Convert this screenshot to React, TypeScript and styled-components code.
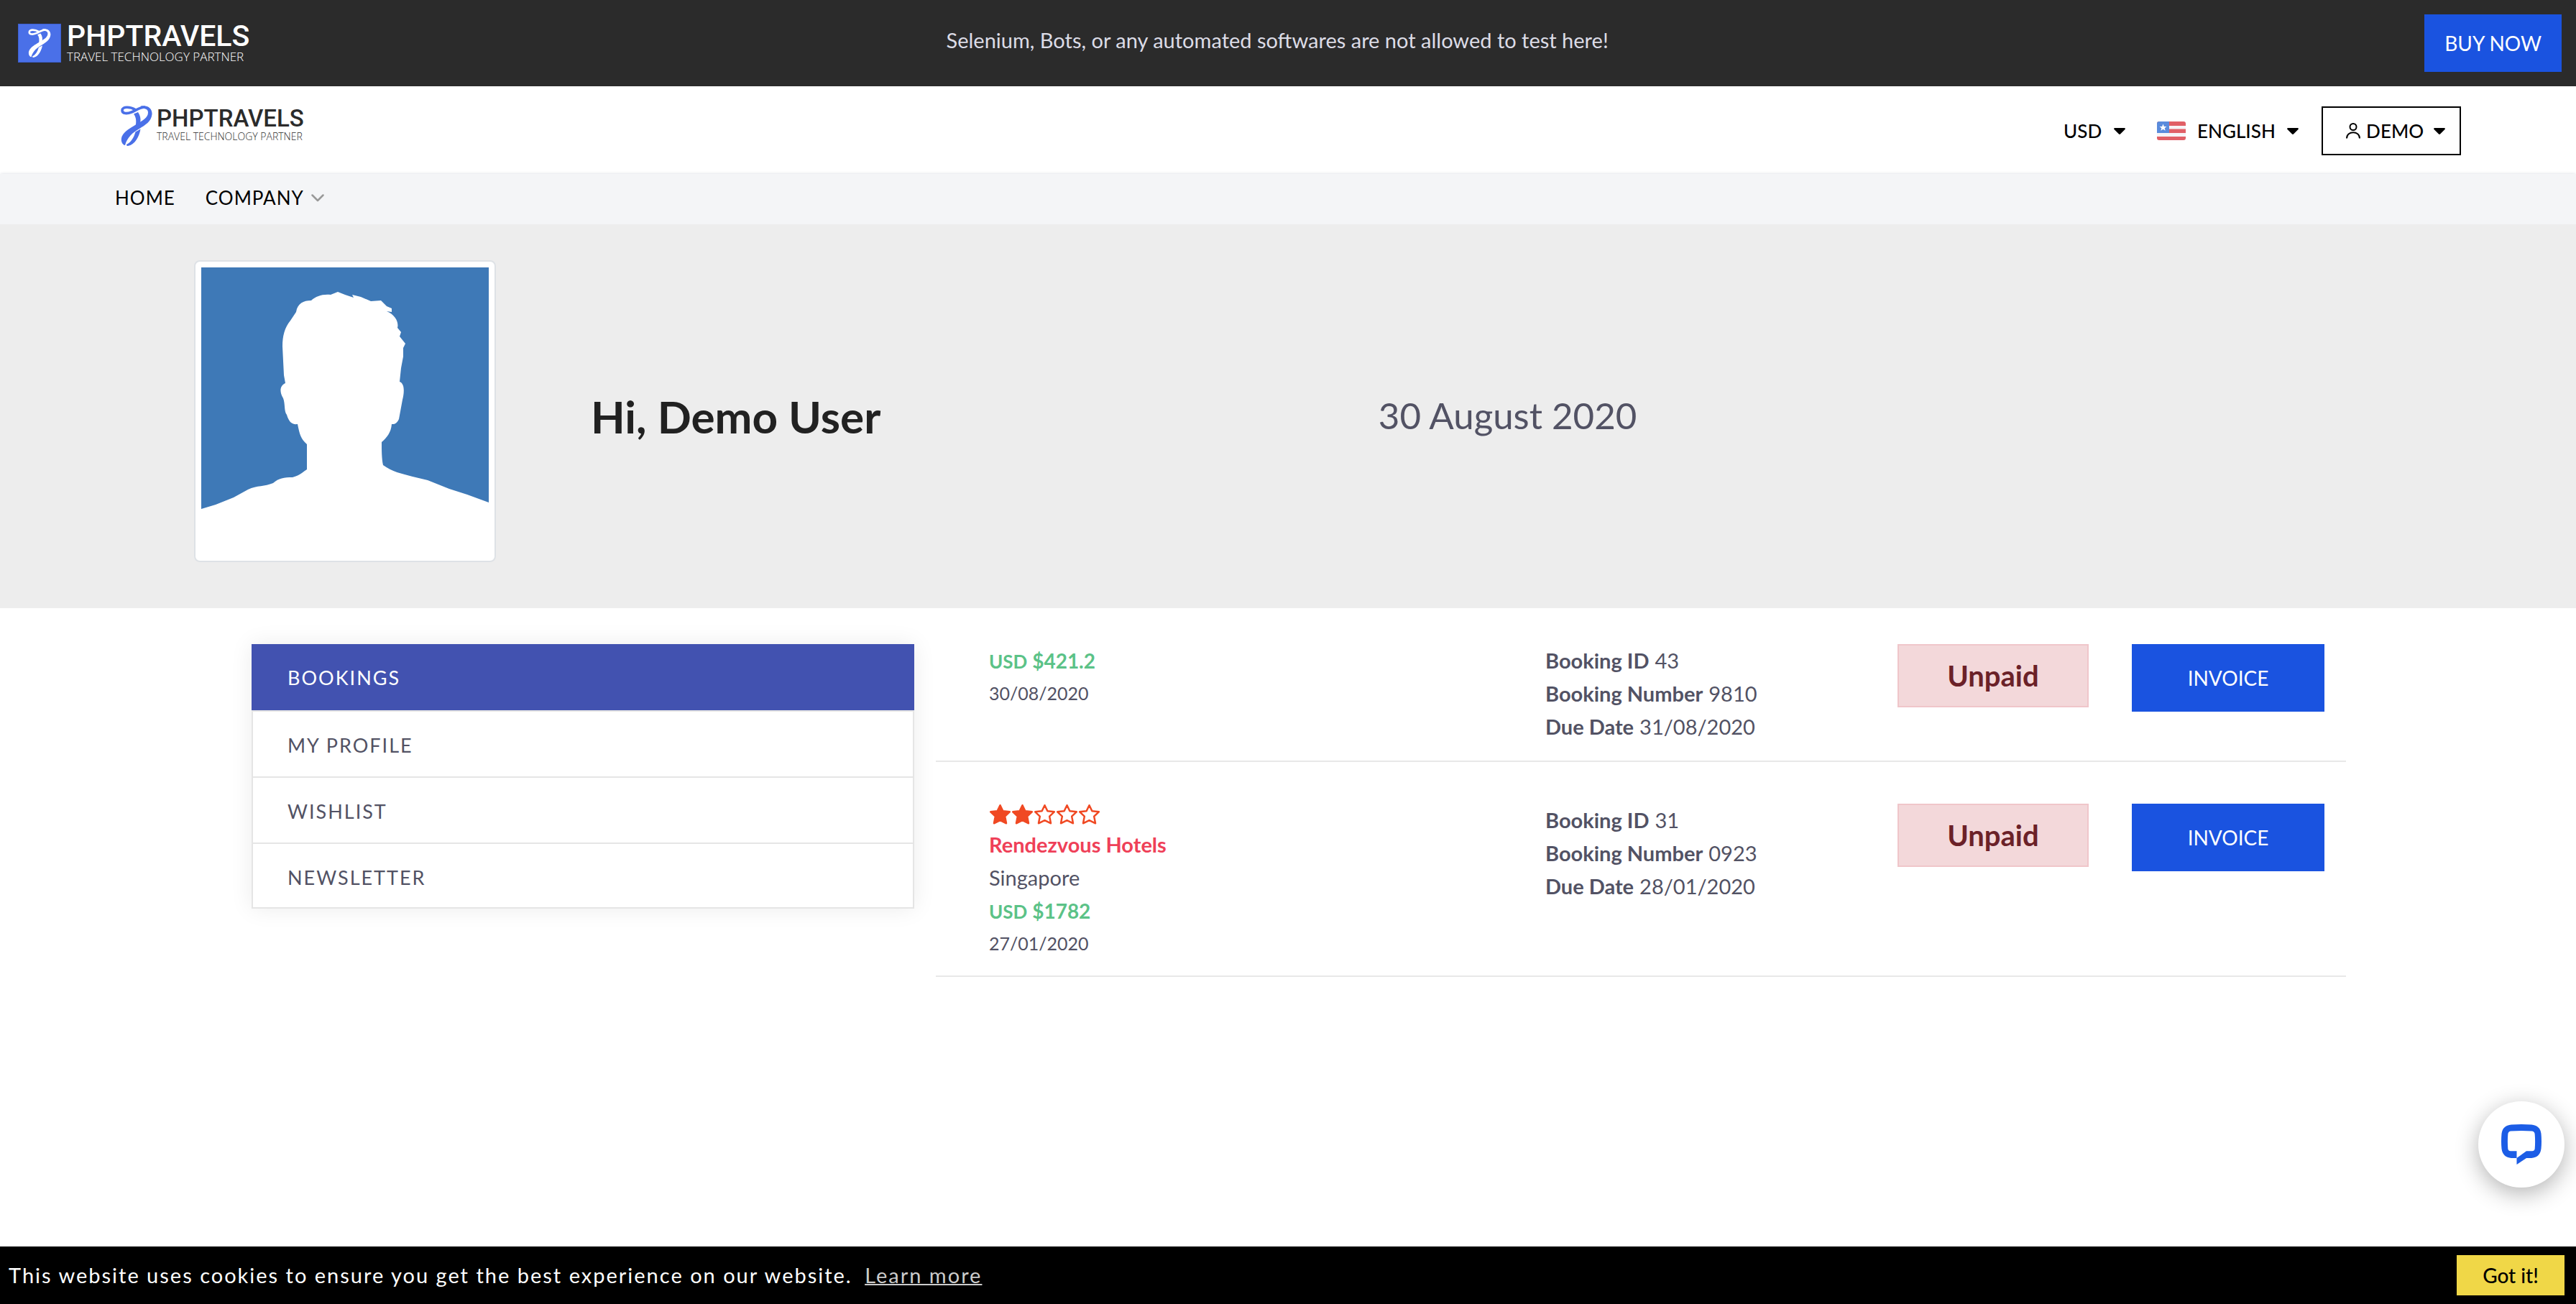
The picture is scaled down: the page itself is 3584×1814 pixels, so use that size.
import React from "react";
import styled, { createGlobalStyle } from "styled-components";

const GlobalStyle = createGlobalStyle`
  *, *::before, *::after { box-sizing: border-box; }
  body {
    margin: 0;
    background: #fff;
    color: #525264;
    font-family: Lato, "Open Sans", "Liberation Sans", sans-serif;
    font-size: 29px;
    line-height: 46px;
  }
  a { color: inherit; text-decoration: none; }
  button, select { font: inherit; color: inherit; }
  h1, p, ul, dl, dd { margin: 0; padding: 0; }
  ul { list-style: none; }
`;

const Page = styled.div`
  min-height: 100vh;
  display: flex;
  flex-direction: column;
`;

const TopBar = styled.div`
  display: grid;
  grid-template-columns: 1264fr auto 1298fr;
  align-items: center;
  min-height: 120px;
  padding: 20px 20px 20px 25px;
  background: #2b2b2b;
  color: #dcdce6;
`;

const Notice = styled.p`
  padding-bottom: 8px;
`;

const SolidButton = styled.a<{ $height: number }>`
  display: flex;
  align-items: center;
  justify-content: center;
  height: ${(p) => p.$height}px;
  padding: 0 28px;
  background: #1a53e0;
  color: #fff;
  font-size: 28px;
`;

const BuySlot = styled.div`
  display: flex;
  justify-content: flex-end;
`;

const Header = styled.header`
  display: flex;
  align-items: center;
  justify-content: space-between;
  min-height: 122px;
  padding: 2px 160px 0;
  color: #000;
  background: #fff;
`;

const LogoLink = styled.a<{ $gap: number; $color: string }>`
  display: flex;
  align-items: center;
  gap: ${(p) => p.$gap}px;
  color: ${(p) => p.$color};
`;

const LogoWords = styled.span`
  display: flex;
  flex-direction: column;
  padding-bottom: 4px;
`;

const LogoName = styled.span<{ $size: number; $line: number }>`
  font-family: Roboto, "Liberation Sans", sans-serif;
  font-size: ${(p) => p.$size}px;
  line-height: ${(p) => p.$line}px;
  font-weight: 500;
`;

const LogoTag = styled.span<{ $size: number }>`
  font-family: "Open Sans", "Noto Sans", sans-serif;
  font-size: ${(p) => p.$size}px;
  line-height: 16px;
  font-weight: 300;
`;

const LogoTile = styled.span`
  display: flex;
  align-items: center;
  justify-content: center;
  width: 60px;
  height: 54px;
  background: #4a70e8;
  border: 1px solid #3c5fd0;
`;

const HeaderLogo = styled.div`
  padding: 0 0 14px 8px;
`;

const Tools = styled.div`
  display: flex;
  align-items: center;
  font-size: 26px;
  font-weight: 500;
`;

const Picker = styled.label`
  display: flex;
  align-items: center;
  gap: 16px;
  margin-right: 44px;

  & + & { margin-right: 32px; }
`;

const PickerSelect = styled.select`
  appearance: none;
  border: 0;
  padding: 0;
  background: transparent;
  font-weight: 500;
`;

const AccountButton = styled.button`
  display: flex;
  align-items: center;
  height: 68px;
  padding: 0 20px 0 32px;
  gap: 14px;
  border: 2px solid #000;
  background: #fff;
  font-weight: 500;
`;

const AccountName = styled.span`
  display: flex;
  align-items: center;
  gap: 8px;
`;

const Nav = styled.nav`
  display: flex;
  align-items: center;
  gap: 42px;
  min-height: 70px;
  padding: 0 160px 4px;
  background: #f4f5f7;
  box-shadow: 0 -1px 4px -1px rgba(30, 50, 90, 0.18);
  color: #000;
  font-size: 26px;
  letter-spacing: 1px;
`;

const NavLink = styled.a`
  display: flex;
  align-items: center;
  gap: 10px;
`;

const Hero = styled.section`
  display: grid;
  grid-template-columns: 552px 36% 1fr;
  align-items: center;
  padding: 50px 270px 64px;
  background: #ededed;
`;

const AvatarCard = styled.div`
  width: 420px;
  height: 420px;
  padding: 8px;
  border: 2px solid #dee2e6;
  border-radius: 8px;
  background: #fff;

  svg { display: block; }
`;

const Greeting = styled.h1`
  padding-top: 14px;
  color: #212121;
  font-size: 62px;
  line-height: 72px;
  font-weight: 700;
`;

const Today = styled.p`
  padding-top: 12px;
  font-size: 51px;
  line-height: 72px;
`;

const Main = styled.main`
  display: grid;
  grid-template-columns: 922fr 1962fr;
  align-items: start;
  gap: 30px;
  padding: 50px 320px 160px 350px;
`;

const SideMenu = styled.ul`
  border: 2px solid #e5e5e5;
  border-top: 0;
  box-shadow: 0 0 30px rgba(0, 0, 0, 0.08);
  background: #fff;
  font-size: 27px;
  letter-spacing: 2px;
`;

const SideItem = styled.li<{ $active: boolean }>`
  margin: ${(p) => (p.$active ? "0 -2px" : "0")};
  padding-left: ${(p) => (p.$active ? "2px" : "0")};
  background: ${(p) => (p.$active ? "#4252b0" : "#fff")};
  color: ${(p) => (p.$active ? "#fff" : "inherit")};

  & + & { border-top: 2px solid #e5e5e5; }

  a {
    display: block;
    padding: 24px 48px 20px;
  }

  &:first-child a { padding-bottom: 22px; }
  &:last-child a { padding-bottom: 18px; }
`;

const Bookings = styled.div``;

const Booking = styled.article`
  display: grid;
  grid-template-columns: 714fr 430fr 266fr 268fr;
  align-items: start;
  gap: 60px;
  padding: 0 30px 24px 74px;
  border-bottom: 2px solid #e8e8e8;

  & + & { padding-top: 58px; }
`;

const Stars = styled.div`
  display: flex;
  height: 34px;
`;

const HotelName = styled.p`
  color: #ef4058;
  font-weight: 700;
`;

const Price = styled.p`
  color: #5bc287;
  font-size: 28px;
  font-weight: 700;
`;

const Currency = styled.span`
  font-size: 26px;
`;

const BookedOn = styled.p`
  font-size: 25px;
  line-height: 42px;
`;

const DetailRow = styled.div`
  display: flex;
  gap: 8px;

  dt { font-weight: 700; }
`;

const Status = styled.div`
  display: flex;
  align-items: center;
  justify-content: center;
  height: 88px;
  border: 2px solid #f0c6ca;
  background: #f3d8da;
  color: #6b2128;
  font-size: 40px;
  font-weight: 700;
`;

const ChatButton = styled.button`
  position: fixed;
  right: 16px;
  bottom: 162px;
  width: 120px;
  height: 120px;
  padding: 0;
  display: flex;
  align-items: center;
  justify-content: center;
  border: 0;
  border-radius: 50%;
  background: #fff;
  box-shadow: 0 8px 32px rgba(0, 0, 0, 0.3);
`;

const CookieBar = styled.div`
  position: fixed;
  left: 0;
  right: 0;
  bottom: 0;
  display: flex;
  align-items: center;
  justify-content: space-between;
  height: 80px;
  padding: 0 16px 0 12px;
  background: #000;
  color: #fff;
  letter-spacing: 2px;
`;

const LearnMore = styled.a`
  margin-left: 8px;
  color: #ccc;
  text-decoration: underline;
  text-decoration-thickness: 2px;
`;

const AcceptButton = styled.button`
  width: 150px;
  height: 56px;
  padding: 0;
  border: 0;
  background: #f0d747;
  color: #000;
  font-size: 28px;
  font-weight: 500;
`;

function Ribbon({ width, height, color }: { width: number; height: number; color: string }) {
  return (
    <svg width={width} height={height} viewBox="0 0 44 56" fill={color} aria-hidden="true">
      <path d="M20 5.500C14 1.500 2 0.500 2 6.500C2 11.500 9 11.500 15 9C22 6 27 2 34 2" fill="none" stroke={color} strokeWidth="3.600" />
      <path d="M28 0.500C39 -1 44 5 43.500 12C42.500 22 34 27 26 32C17 37 9 44 6 55C2 54 -0.500 49 1.500 43C5 35 14 31 20 27C30 21 38 17 38 9.500C38 5 34 3.500 27 3.800Z" />
      <path d="M18 11.500L24 9C27.500 14 28.500 20 26.500 26L20.500 29C22 22 21.500 16 18 11.500Z" />
      <path d="M27.500 32.500C26 42 20 54.500 10 56C8.500 56 8 55.500 8 54C14 51 18 45 20.500 36.500Z" />
    </svg>
  );
}

function Caret() {
  return (
    <svg width="16" height="9" viewBox="0 0 16 9" aria-hidden="true">
      <path d="M1 0H15Q16.500 0.500 15.500 2L9 8.500Q8 9.300 7 8.500L0.500 2Q-0.500 0.500 1 0Z" fill="#000" />
    </svg>
  );
}

function Flag() {
  return (
    <svg width="40" height="26" viewBox="0 0 40 26" aria-hidden="true">
      <clipPath id="flag-corners"><rect width="40" height="26" rx="3" /></clipPath>
      <g clipPath="url(#flag-corners)">
        <rect width="40" height="26" fill="#f7f3f6" />
        <path d="M0 0H40V6H0ZM0 10.500H40V16H0ZM0 21H40V26H0Z" fill="#e15f66" />
        <rect width="17" height="16" fill="#5a8bdc" />
        <path d="M8.500 3.500L9.900 7H13.500L10.700 9.200L11.700 12.800L8.500 10.700L5.300 12.800L6.300 9.200L3.500 7H7.100Z" fill="#fff" />
      </g>
    </svg>
  );
}

function Person() {
  return (
    <svg width="20" height="22" viewBox="0 0 20 22" fill="none" stroke="#000" strokeWidth="2" aria-hidden="true">
      <circle cx="10" cy="5.500" r="4.500" />
      <path d="M1 21.500C1 10.500 19 10.500 19 21.500" />
    </svg>
  );
}

function Chevron() {
  return (
    <svg width="18" height="11" viewBox="0 0 18 11" fill="none" stroke="#999" strokeWidth="2.500" aria-hidden="true">
      <path d="M1.500 1.500L9 9L16.500 1.500" strokeLinecap="round" strokeLinejoin="round" />
    </svg>
  );
}

function Star({ filled }: { filled: boolean }) {
  return (
    <svg width="31" height="30" viewBox="0 0 31 30" aria-hidden="true">
      <path
        d="M15.500 2.200L19.400 10.200L28.800 11.300L22.200 17.700L24 27.300L15.500 23.200L7 27.300L8.800 17.700L2.200 11.300L11.600 10.200Z"
        fill={filled ? "#f04923" : "none"}
        stroke="#f04923"
        strokeWidth="2.500"
        strokeLinejoin="round"
      />
    </svg>
  );
}

function Avatar() {
  return (
    <svg width="400" height="400" viewBox="0 0 400 400" role="img" aria-label="Demo User">
      <rect width="400" height="400" fill="#3e79b7" />
      <path
        fill="#fff"
        d="M0 336L20 330L45 320L65 309C78 303 88 305 100 300C108 293 115 292 127 292C138 289 142 284 147 281L147 246C138 238 137 232 134 218C126 219 122 215 119 205C115 200 117 190 114 182C108 172 110 164 117 161L115 150L113 110C113 95 116 84 124 74L132 62C134 50 142 46 153 46C160 40 168 37 180 38L190 34L200 38L212 42L210 38L222 41L236 47L250 46L258 54L265 57V62L258 61C270 66 275 76 273 84L278 90L276 96L284 106L281 112L281 124L278 140L276 159C284 162 282 176 280 184L275 211C272 218 268 218 265 218C264 230 258 237 251 243C251 254 251 266 253 275C265 284 279 287 294 291L315 296L345 308L370 316L400 327V400H0Z"
      />
    </svg>
  );
}

function ChatIcon() {
  return (
    <svg width="56" height="56" viewBox="0 0 56 56" aria-hidden="true">
      <path
        fill="#1c5de6"
        fillRule="evenodd"
        d="M14 0.500Q28 -0.500 42 0.500Q54 1.500 55.500 13Q56.500 24 55.500 34Q54 46 42 47H35L21.500 56V47H14Q2 46 0.500 34Q-0.500 24 0.500 13Q2 1.500 14 0.500ZM13 9.500Q9.500 10 9.300 14Q8.500 24 9.300 34Q9.500 37 13 37.300H21.500V47L35 37.300H43Q46.500 37 46.700 34Q47.500 24 46.700 14Q46.500 10 43 9.500Q28 8.500 13 9.500Z"
      />
    </svg>
  );
}

const menu = ["BOOKINGS", "MY PROFILE", "WISHLIST", "NEWSLETTER"];

interface BookingData {
  hotel?: string;
  city?: string;
  stars?: number;
  price: string;
  date: string;
  details: [string, string][];
}

const bookings: BookingData[] = [
  {
    price: "$421.2",
    date: "30/08/2020",
    details: [["Booking ID", "43"], ["Booking Number", "9810"], ["Due Date", "31/08/2020"]],
  },
  {
    hotel: "Rendezvous Hotels",
    city: "Singapore",
    stars: 2,
    price: "$1782",
    date: "27/01/2020",
    details: [["Booking ID", "31"], ["Booking Number", "0923"], ["Due Date", "28/01/2020"]],
  },
];

export default function App() {
  return (
    <Page>
      <GlobalStyle />
      <TopBar>
        <LogoLink href="#" $gap={8} $color="#fff">
          <LogoTile><Ribbon width={32} height={40} color="#fff" /></LogoTile>
          <LogoWords>
            <LogoName $size={41} $line={42}>PHPTRAVELS</LogoName>
            <LogoTag $size={17}>TRAVEL TECHNOLOGY PARTNER</LogoTag>
          </LogoWords>
        </LogoLink>
        <Notice>Selenium, Bots, or any automated softwares are not allowed to test here!</Notice>
        <BuySlot><SolidButton href="#" $height={80}>BUY NOW</SolidButton></BuySlot>
      </TopBar>

      <Header>
        <HeaderLogo>
          <LogoLink href="#" $gap={6} $color="#2b2b2b">
            <Ribbon width={44} height={56} color="#4a70e8" />
            <LogoWords>
              <LogoName $size={33} $line={34}>PHPTRAVELS</LogoName>
              <LogoTag $size={14}>TRAVEL TECHNOLOGY PARTNER</LogoTag>
            </LogoWords>
          </LogoLink>
        </HeaderLogo>
        <Tools>
          <Picker>
            <PickerSelect aria-label="Currency"><option>USD</option></PickerSelect>
            <Caret />
          </Picker>
          <Picker>
            <Flag />
            <PickerSelect aria-label="Language"><option>ENGLISH</option></PickerSelect>
            <Caret />
          </Picker>
          <AccountButton type="button">
            <AccountName><Person />DEMO</AccountName>
            <Caret />
          </AccountButton>
        </Tools>
      </Header>

      <Nav>
        <NavLink href="#">HOME</NavLink>
        <NavLink href="#">COMPANY<Chevron /></NavLink>
      </Nav>

      <Hero>
        <AvatarCard><Avatar /></AvatarCard>
        <Greeting>Hi, Demo User</Greeting>
        <Today>30 August 2020</Today>
      </Hero>

      <Main>
        <SideMenu>
          {menu.map((label, i) => (
            <SideItem key={label} $active={i === 0}><a href="#">{label}</a></SideItem>
          ))}
        </SideMenu>
        <Bookings>
          {bookings.map((b) => (
            <Booking key={b.price}>
              <div>
                {b.stars && (
                  <Stars>{[1, 2, 3, 4, 5].map((n) => <Star key={n} filled={n <= b.stars!} />)}</Stars>
                )}
                {b.hotel && <HotelName>{b.hotel}</HotelName>}
                {b.city && <p>{b.city}</p>}
                <Price><Currency>USD</Currency> {b.price}</Price>
                <BookedOn>{b.date}</BookedOn>
              </div>
              <dl>
                {b.details.map(([term, value]) => (
                  <DetailRow key={term}><dt>{term}</dt><dd>{value}</dd></DetailRow>
                ))}
              </dl>
              <Status>Unpaid</Status>
              <SolidButton href="#" $height={94}>INVOICE</SolidButton>
            </Booking>
          ))}
        </Bookings>
      </Main>

      <ChatButton type="button" aria-label="Open chat"><ChatIcon /></ChatButton>
      <CookieBar>
        <span>
          This website uses cookies to ensure you get the best experience on our website.
          {" "}<LearnMore href="#">Learn more</LearnMore>
        </span>
        <AcceptButton type="button">Got it!</AcceptButton>
      </CookieBar>
    </Page>
  );
}
